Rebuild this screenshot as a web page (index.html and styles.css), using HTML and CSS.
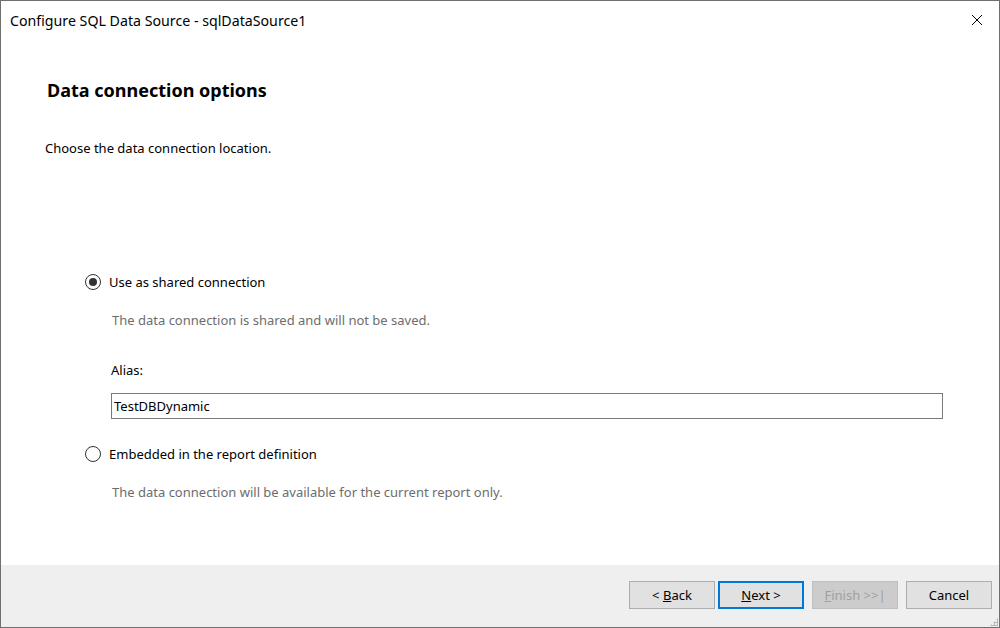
FILE: index.html
```html
<!DOCTYPE html>
<html lang="en">
<head>
    <meta charset="UTF-8">
    <title>Configure SQL Data Source - sqlDataSource1</title>
    <link rel="stylesheet" href="styles.css">
</head>
<body>

    <div class="window">

        <div class="titleBar">
            <span class="titleText">Configure SQL Data Source - sqlDataSource1</span>
            <button class="closeButton" title="Close">
                <svg width="12" height="12" viewBox="0 0 12 12">
                    <path d="M1 1 L11 11 M11 1 L1 11" stroke="#000" stroke-width="1" fill="none"/>
                </svg>
            </button>
        </div>

        <div class="page">
            <h1 class="pageTitle">Data connection options</h1>
            <p class="pageHint">Choose the data connection location.</p>

            <div class="options">
                <label class="option">
                    <input type="radio" name="location" checked>
                    <span class="radioMark"></span>
                    <span>Use as shared connection</span>
                </label>
                <p class="optionNote">The data connection is shared and will not be saved.</p>

                <div class="aliasField">
                    <div class="aliasLabel">Alias:</div>
                    <input class="aliasInput" type="text" value="TestDBDynamic">
                </div>

                <label class="option">
                    <input type="radio" name="location">
                    <span class="radioMark"></span>
                    <span>Embedded in the report definition</span>
                </label>
                <p class="optionNote">The data connection will be available for the current report only.</p>
            </div>
        </div>

        <div class="footer">
            <button class="wizardButton">&lt; <u>B</u>ack</button>
            <button class="wizardButton default"><u>N</u>ext &gt;</button>
            <button class="wizardButton" disabled><u>F</u>inish &gt;&gt;|</button>
            <button class="wizardButton">Cancel</button>
            <span class="sizeGrip"></span>
        </div>

    </div>

</body>
</html>
```

FILE: styles.css
```css
html, body {
    margin:             0;
    height:             100%;
}

body {
    font-family:        "Noto Sans", "Open Sans", sans-serif;
    font-size:          13px;
    color:              #000;
    background-color:   #fff;
}

.window {
    box-sizing:         border-box;
    height:             628px;
    border:             1px solid #6f6f6f;
    display:            flex;
    flex-direction:     column;
    background-color:   #fff;
}

/* title bar */
.titleBar {
    height:             38px;
    display:            flex;
    align-items:        center;
    justify-content:    space-between;
    padding-left:       9px;
}

.titleText {
    font-size:          14.2px;
}

.closeButton {
    width:              46px;
    height:             38px;
    border:             none;
    background:         none;
    display:            flex;
    align-items:        center;
    justify-content:    center;
    padding:            0 0 0 2px;
}

/* page body */
.page {
    flex:               1;
    padding:            0 0 0 44px;
}

.pageTitle {
    font-size:          18px;
    font-weight:        bold;
    margin:             39px 0 0 2px;
    line-height:        24px;
}

.pageHint {
    margin:             38px 0 0 0;
    line-height:        16px;
}

.options {
    margin:             116px 0 0 40px;
    width:              858px;
}

.option {
    display:            flex;
    align-items:        center;
    gap:                8px;
    height:             20px;
}

.option input {
    display:            none;
}

.radioMark {
    box-sizing:         border-box;
    width:              16px;
    height:             16px;
    border:             1px solid #333;
    border-radius:      50%;
    display:            flex;
    align-items:        center;
    justify-content:    center;
    background-color:   #fff;
}

.option input:checked + .radioMark::after {
    content:            "";
    width:              8px;
    height:             8px;
    border-radius:      50%;
    background-color:   #333;
}

.optionNote {
    margin:             20px 0 0 27px;
    color:              #6d6d6d;
    line-height:        16px;
}

.aliasField {
    margin:             34px 0 25px 26px;
}

.aliasLabel {
    line-height:        16px;
}

.aliasInput {
    box-sizing:         border-box;
    display:            block;
    width:              832px;
    height:             26px;
    margin-top:         15px;
    border:             1px solid #7a7a7a;
    padding:            0 2px;
    font-family:        inherit;
    font-size:          13px;
    color:              #000;
    outline:            none;
}

/* button strip */
.footer {
    position:           relative;
    height:             62px;
    background-color:   #efefef;
    display:            flex;
    justify-content:    flex-end;
    align-items:        flex-start;
    padding:            16px 7px 0 0;
    box-sizing:         border-box;
    gap:                8px;
}

.wizardButton {
    box-sizing:         border-box;
    width:              86px;
    height:             28px;
    border:             1px solid #adadad;
    background-color:   #e1e1e1;
    font-family:        inherit;
    font-size:          13px;
    color:              #000;
    padding:            0;
}

.wizardButton:first-child {
    margin-right:       -5px;
}

.wizardButton.default {
    border:             2px solid #0078d7;
}

.wizardButton:disabled {
    background-color:   #cccccc;
    border-color:       #bfbfbf;
    color:              #a0a0a0;
}

.sizeGrip {
    position:           absolute;
    right:              1px;
    bottom:             1px;
    width:              8px;
    height:             8px;
    background:
        radial-gradient(circle, #b8b8b8 1px, transparent 1.2px) 0 0 / 3px 3px;
    clip-path:          polygon(100% 0, 100% 100%, 0 100%);
}
```
